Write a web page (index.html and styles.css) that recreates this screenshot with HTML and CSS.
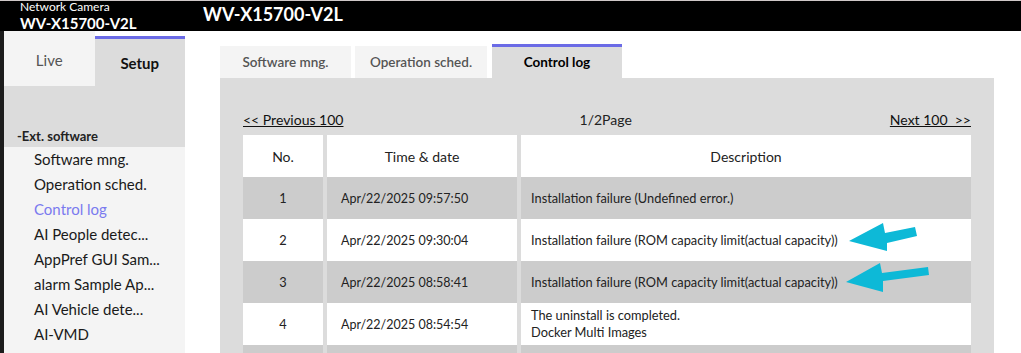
FILE: index.html
```html
<!DOCTYPE html>
<html lang="en">

<head>
  <meta charset="utf-8">
  <meta name="viewport" content="width=device-width, initial-scale=1.0">
  <link rel="stylesheet" href="styles.css">
</head>

<body>

  <div class="top-bar">
    <div class="brand">
      <div class="brand-sub">Network Camera</div>
      <div class="brand-model">WV-X15700-V2L</div>
    </div>
    <div class="page-title">WV-X15700-V2L</div>
  </div>

  <div class="layout">
    <div class="sidebar">
      <div class="mode-tabs">
        <div class="mode-tab">Live</div>
        <div class="mode-tab active">Setup</div>
      </div>
      <div class="side-section">-Ext. software</div>
      <ul class="side-menu">
        <li>Software mng.</li>
        <li>Operation sched.</li>
        <li class="current">Control log</li>
        <li>AI People detec...</li>
        <li>AppPref GUI Sam...</li>
        <li>alarm Sample Ap...</li>
        <li>AI Vehicle dete...</li>
        <li>AI-VMD</li>
      </ul>
    </div>

    <div class="content">
      <div class="sub-tabs">
        <div class="sub-tab">Software mng.</div>
        <div class="sub-tab">Operation sched.</div>
        <div class="sub-tab active">Control log</div>
      </div>

      <div class="panel">
        <div class="pager">
          <a class="pager-link">&lt;&lt; Previous 100</a>
          <span>1/2Page</span>
          <a class="pager-link">Next 100 &nbsp;&gt;&gt;</a>
        </div>

        <table class="log-table">
          <thead>
            <tr>
              <th class="col-no">No.</th>
              <th class="col-time">Time &amp; date</th>
              <th class="col-desc">Description</th>
            </tr>
          </thead>
          <tbody>
            <tr>
              <td class="col-no">1</td>
              <td class="col-time">Apr/22/2025 09:57:50</td>
              <td class="col-desc">Installation failure (Undefined error.)</td>
            </tr>
            <tr>
              <td class="col-no">2</td>
              <td class="col-time">Apr/22/2025 09:30:04</td>
              <td class="col-desc">Installation failure (ROM capacity limit(actual capacity))</td>
            </tr>
            <tr>
              <td class="col-no">3</td>
              <td class="col-time">Apr/22/2025 08:58:41</td>
              <td class="col-desc">Installation failure (ROM capacity limit(actual capacity))</td>
            </tr>
            <tr>
              <td class="col-no">4</td>
              <td class="col-time">Apr/22/2025 08:54:54</td>
              <td class="col-desc">The uninstall is completed.<br>Docker Multi Images</td>
            </tr>
            <tr>
              <td class="col-no"></td>
              <td class="col-time"></td>
              <td class="col-desc"></td>
            </tr>
          </tbody>
        </table>

        <!-- callout arrows -->
        <svg class="arrow arrow-1" width="75" height="34" viewBox="0 0 75 34">
          <polygon points="3,21 37,3 39,13 69,7 71,16 41,23 41,31" />
        </svg>
        <svg class="arrow arrow-2" width="90" height="36" viewBox="0 0 90 36">
          <polygon points="3,22 37,3 39,13 85,7 86,15 40,21 40,32" />
        </svg>
      </div>
    </div>
  </div>

</body>

</html>
```

FILE: styles.css
```css
html,
body {
  margin: 0;
  padding: 0;
  height: 100%;
  background: #fff;
  font-family: "Lato", "Noto Sans", sans-serif;
  color: #222;
  overflow: hidden;
}

/* Header */
.top-bar {
  height: 30px;
  background: #000;
  border-top: 1px solid #cfc8c8;
  color: #fff;
  display: flex;
  align-items: center;
}

.brand {
  width: 183px;
  padding-left: 20px;
  box-sizing: border-box;
  line-height: 1;
}

.brand-sub {
  font-size: 12px;
  margin-top: -1px;
}

.brand-model {
  font-size: 15px;
  font-weight: bold;
  margin-top: 3px;
}

.page-title {
  font-size: 18px;
  font-weight: bold;
  margin-left: 20px;
  margin-top: -4px;
}

.layout {
  display: flex;
  height: calc(100% - 31px);
}

/* Sidebar */
.sidebar {
  width: 181px;
  border-left: 4px solid #1c1c1c;
  flex-shrink: 0;
  background: #f4f4f4;
}

.mode-tabs {
  display: flex;
  height: 55px;
  background: #fff;
}

.mode-tab {
  flex: 1;
  display: flex;
  align-items: center;
  justify-content: center;
  font-size: 15px;
  color: #555;
  background: #f4f4f4;
  padding-top: 2px;
  box-sizing: border-box;
}

.mode-tab.active {
  margin-top: 5px;
  border-top: 3px solid #6b6be6;
  background: #dcdcdc;
  color: #111;
  font-weight: bold;
  padding-top: 0;
}

.side-section {
  height: 61px;
  background: #dcdcdc;
  font-size: 13px;
  font-weight: bold;
  padding: 40px 0 0 13px;
  box-sizing: border-box;
  line-height: 20px;
}

.side-menu {
  list-style: none;
  margin: 0;
  padding: 0 0 0 30px;
}

.side-menu li {
  font-size: 15px;
  line-height: 25px;
  color: #1a1a1a;
}

.side-menu li.current {
  color: #7a7aef;
}

/* Content */
.content {
  flex: 1;
  padding: 13px 0 0 35px;
}

.sub-tabs {
  display: flex;
  align-items: flex-end;
  height: 34px;
}

.sub-tab {
  height: 32px;
  background: #f4f4f4;
  font-size: 13.5px;
  font-weight: 600;
  color: #555;
  display: flex;
  align-items: center;
  justify-content: center;
  margin-right: 4px;
  width: 131px;
  box-sizing: border-box;
}

.sub-tab:nth-child(2) {
  width: 132px;
  margin-right: 5px;
}

.sub-tab.active {
  width: 130px;
  height: 34px;
  border-top: 3px solid #6b6be6;
  background: #dcdcdc;
  color: #000;
  font-weight: bold;
  padding-bottom: 2px;
}

.panel {
  width: 774px;
  height: 400px;
  background: #dcdcdc;
  padding: 32px 23px 0;
  box-sizing: border-box;
  position: relative;
}

.pager {
  display: flex;
  justify-content: space-between;
  font-size: 14px;
  line-height: 20px;
  margin-bottom: 5px;
}

.pager span {
  margin-left: -22px;
}

.pager-link {
  color: #111;
  text-decoration: underline;
}

.log-table {
  border-collapse: separate;
  border-spacing: 4px 0;
  margin: 0 -4px;
  table-layout: fixed;
  width: 736px;
}

.log-table th,
.log-table td {
  height: 42px;
  padding: 0;
  background: #fff;
  box-sizing: border-box;
}

.log-table th {
  font-size: 14px;
  font-weight: normal;
  text-align: center;
}

.log-table td {
  font-size: 12.8px;
  line-height: 17px;
}

.log-table tbody tr:nth-child(odd) td {
  background: #cccccc;
}

.col-no {
  width: 80px;
  text-align: center;
}

.col-time {
  width: 190px;
}

td.col-time {
  padding-left: 14px;
  font-size: 12.5px;
}

.col-desc {
  width: 450px;
}

td.col-desc {
  padding-left: 10px;
}

.arrow {
  position: absolute;
  fill: #0db9d7;
}

.arrow-1 {
  left: 626px;
  top: 142px;
}

.arrow-2 {
  left: 623px;
  top: 182px;
}
```
